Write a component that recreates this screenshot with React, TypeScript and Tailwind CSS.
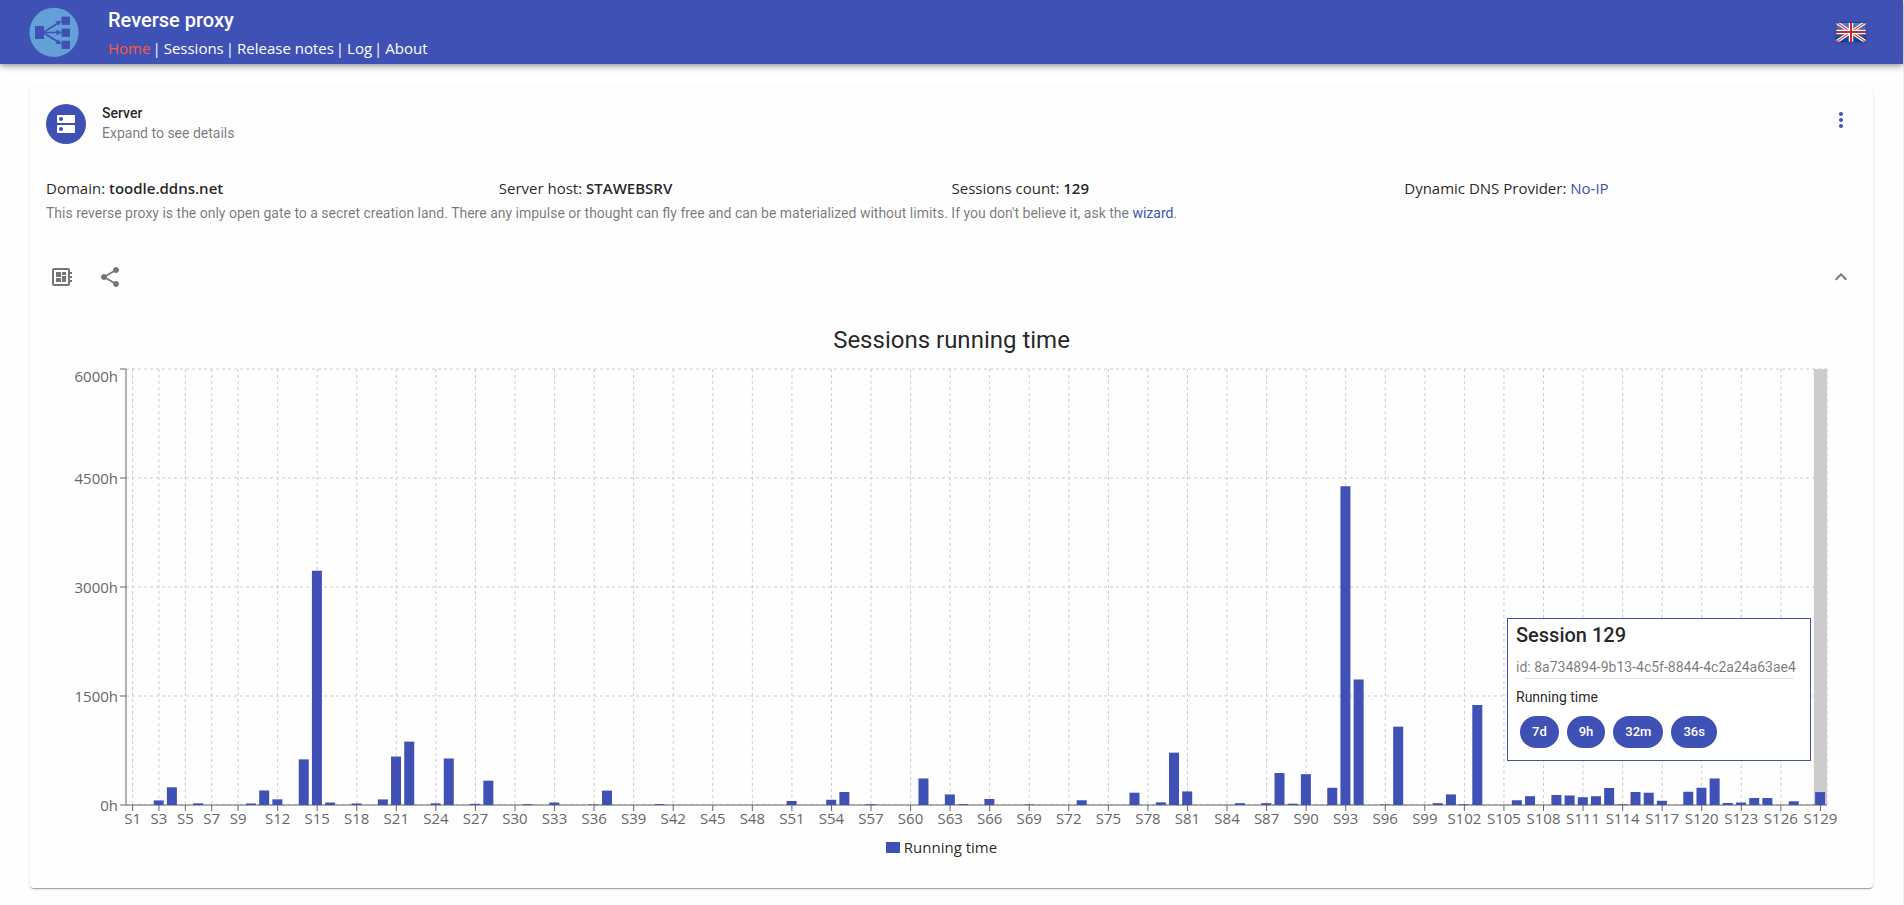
import type { ReactNode } from "react";
import { MdDeveloperBoard, MdDns, MdExpandLess, MdMoreVert, MdShare } from "react-icons/md";

const SEGOE = "font-['Open_Sans','Noto_Sans',sans-serif]";

const SESSION_COUNT = 129;
const MAX_HOURS = 6000;

const RUNNING_HOURS: Record<number, number> = {
  3: 63, 4: 244, 6: 23, 10: 21, 11: 200, 12: 78, 14: 628, 15: 3224, 16: 34, 18: 21, 20: 77,
  21: 667, 22: 872, 24: 23, 25: 640, 27: 16, 28: 335, 31: 11, 33: 34, 36: 7, 37: 198, 41: 12,
  51: 55, 54: 72, 55: 179, 57: 11, 61: 365, 63: 145, 64: 12, 66: 83, 69: 7, 73: 65, 77: 169,
  79: 37, 80: 720, 81: 187, 85: 25, 87: 25, 88: 440, 89: 18, 90: 424, 92: 237, 93: 4387,
  94: 1727, 96: 6, 97: 1078, 100: 25, 101: 146, 102: 10, 103: 1376, 106: 65, 107: 121,
  109: 138, 110: 131, 111: 107, 112: 121, 113: 234, 114: 10, 115: 179, 116: 169, 117: 58,
  119: 182, 120: 237, 121: 365, 122: 28, 123: 34, 124: 96, 125: 96, 127: 51, 129: 177.5,
};

const X_TICKS = [1, 3, 5, 7, 9, ...Array.from({ length: 40 }, (_, i) => 12 + i * 3)];
const Y_TICKS = [0, 1500, 3000, 4500, 6000];

const CHART = { width: 1811, height: 465, left: 80, right: 1781, top: 5, bottom: 441 };

function Logo() {
  return (
    <svg viewBox="0 0 50 50" className="size-[50px]" aria-hidden="true">
      <circle cx="25" cy="25.3" r="24.6" fill="#64a0d8" />
      <g fill="#3f51b5">
        <rect x="6" y="19" width="9" height="13" />
        <rect x="32.500" y="9.600" width="8.500" height="8.200" />
        <rect x="32.500" y="21.600" width="8.500" height="8.200" />
        <rect x="32.500" y="33.700" width="8.500" height="8.200" />
        <path d="M14 25.500 30 15.500M14 25.500H30M14 25.500 30 35.500" stroke="#3f51b5" strokeWidth="1.700" />
        <path d="m32.500 13.700-3 5-3-4.500zM33 25.500l-5.500 3v-6zM32.500 37.300l-6-.500 3-4.500z" />
      </g>
    </svg>
  );
}

function Flag() {
  return (
    <svg viewBox="0 0 30 20" className="block h-5 w-[30px] drop-shadow-sm" aria-hidden="true">
      <defs>
        <linearGradient id="blue" x1="0" y1="0" x2="0" y2="1">
          <stop offset="0" stopColor="#5f86cc" />
          <stop offset=".5" stopColor="#2a57a5" />
          <stop offset="1" stopColor="#123f8c" />
        </linearGradient>
      </defs>
      <rect width="30" height="20" fill="url(#blue)" />
      <path d="M0 0 30 20M30 0 0 20" stroke="#fff" strokeWidth="3.400" />
      <path d="M0 0 30 20M30 0 0 20" stroke="#e0403f" strokeWidth="1.200" />
      <path d="M15 0V20M0 10H30" stroke="#fff" strokeWidth="4.400" />
      <path d="M15 0V20M0 10H30" stroke="#d8232a" strokeWidth="2" />
      <path d="M0 .5H30" stroke="#12357a" strokeOpacity=".7" />
      <rect x=".5" y=".5" width="29" height="19" fill="none" stroke="#12357a" strokeOpacity=".3" />
    </svg>
  );
}

const NAV = ["Home", "Sessions", "Release notes", "Log", "About"];

function Header() {
  return (
    <header className="flex h-16 items-center bg-[#3f51b5] pr-[37px] pl-[29px] text-white shadow-[0_2px_4px_-1px_rgba(0,0,0,0.2),0_4px_5px_0_rgba(0,0,0,0.14),0_1px_10px_0_rgba(0,0,0,0.12)]">
      <Logo />
      <div className="ml-[29px] grow pt-1">
        <h1 className="text-xl leading-7 font-medium">Reverse proxy</h1>
        <nav className={`flex text-[15px] leading-7 ${SEGOE}`}>
          {NAV.map((item, i) => (
            <span key={item}>
              {i > 0 && <span className="mr-[3px] ml-0.5">|</span>}
              <a href="#" className={i === 0 ? "text-[#ff5a36]" : "text-white"}>{item}</a>
            </span>
          ))}
        </nav>
      </div>
      <button type="button" aria-label="Language">
        <Flag />
      </button>
    </header>
  );
}

function Fact({ label, children }: { label: string; children: ReactNode }) {
  return (
    <div>
      {label}: {children}
    </div>
  );
}

function SessionsChart() {
  const { left, right, top, bottom } = CHART;
  const band = (right - left) / SESSION_COUNT;
  const scale = (bottom - top) / MAX_HOURS;
  const center = (n: number) => left + (n - 0.5) * band;
  const yOf = (hours: number) => bottom - hours * scale;
  return (
    <svg viewBox={`0 0 ${CHART.width} ${CHART.height}`} className={`block w-full text-[15px] ${SEGOE}`} role="img" aria-label="Sessions running time">
      <g stroke="#ccc" strokeDasharray="3 3">
        {Y_TICKS.map((t) => <line key={t} x1={left} x2={right} y1={yOf(t)} y2={yOf(t)} />)}
        {X_TICKS.map((t) => <line key={t} x1={center(t)} x2={center(t)} y1={top} y2={bottom} />)}
        <line x1={right} x2={right} y1={top} y2={bottom} />
      </g>
      <rect x={right - band} y={top} width={band} height={bottom - top} fill="#ccc" />
      <g stroke="#666">
        <line x1={left} x2={right} y1={bottom} y2={bottom} />
        <line x1={left} x2={left} y1={top} y2={bottom} />
        {X_TICKS.map((t) => <line key={t} x1={center(t)} x2={center(t)} y1={bottom} y2={bottom + 6} />)}
        {Y_TICKS.map((t) => <line key={t} x1={left - 6} x2={left} y1={yOf(t)} y2={yOf(t)} />)}
      </g>
      <g fill="#666" textAnchor="middle">
        {X_TICKS.map((t) => <text key={t} x={center(t)} y={bottom + 19}>{`S${t}`}</text>)}
      </g>
      <g fill="#666" textAnchor="end">
        {Y_TICKS.map((t) => <text key={t} x={left - 8} y={Math.max(yOf(t) + 6, 18)}>{`${t}h`}</text>)}
      </g>
      <g fill="#3f51b5">
        {Object.entries(RUNNING_HOURS).map(([n, hours]) => (
          <rect key={n} x={center(Number(n)) - band * 0.4} y={yOf(hours)} width={10} height={hours * scale} />
        ))}
      </g>
    </svg>
  );
}

function SessionTooltip() {
  return (
    <div className="absolute top-[254px] right-[46px] w-[304px] border border-[#3f51b5] bg-white px-2 pb-3">
      <h3 className="text-xl leading-8 font-medium">Session 129</h3>
      <p className="mt-1 text-sm leading-6 whitespace-nowrap text-black/54">id: 8a734894-9b13-4c5f-8844-4c2a24a63ae4</p>
      <hr className="mx-2 -mt-px border-black/12" />
      <p className="mt-2 text-sm leading-5">Running time</p>
      <ul className="mt-[9px] ml-1 flex gap-2">
        {["7d", "9h", "32m", "36s"].map((part) => (
          <li key={part} className="rounded-full bg-[#3f51b5] px-3 text-[13px] leading-8 font-medium text-white">{part}</li>
        ))}
      </ul>
    </div>
  );
}

export default function App() {
  return (
    <div className="min-h-screen border-r border-[#eee] bg-[#fefefe] font-[Roboto,sans-serif] text-black/87">
      <Header />
      <main className="px-[30px] pt-6 pb-4">
        <section className="rounded bg-[#fefefe] px-4 pt-4 shadow-[0_2px_1px_-1px_rgba(0,0,0,0.2),0_1px_1px_0_rgba(0,0,0,0.14),0_1px_3px_0_rgba(0,0,0,0.12)]">
          <div className="flex items-start">
            <span className="flex size-10 items-center justify-center rounded-full bg-[#3f51b5] text-white">
              <MdDns className="size-6" />
            </span>
            <div className="-mt-px ml-4 grow text-sm leading-5">
              <h2 className="font-medium">Server</h2>
              <p className="text-black/54">Expand to see details</p>
            </div>
            <button type="button" aria-label="More" className="mt-1 mr-1 text-[#3f51b5]">
              <MdMoreVert className="size-6" />
            </button>
          </div>

          <div className={`mt-8 grid grid-cols-4 text-[15px] leading-6 ${SEGOE}`}>
            <Fact label="Domain"><b className="font-semibold">toodle.ddns.net</b></Fact>
            <Fact label="Server host"><b className="font-semibold">STAWEBSRV</b></Fact>
            <Fact label="Sessions count"><b className="font-semibold">129</b></Fact>
            <Fact label="Dynamic DNS Provider"><a href="#" className="text-[#3f51b5]">No-IP</a></Fact>
          </div>
          <p className="mt-px text-sm leading-6 text-black/54">
            This reverse proxy is the only open gate to a secret creation land. There any impulse or thought can fly free and can be materialized without limits. If you don't believe it, ask the <a href="#" className="text-[#3f51b5]">wizard</a>.
          </p>

          <div className="mt-10 flex items-center gap-6 px-1 text-black/54">
            <button type="button" aria-label="Board"><MdDeveloperBoard className="size-6" /></button>
            <button type="button" aria-label="Share"><MdShare className="size-6" /></button>
            <button type="button" aria-label="Collapse" className="ml-auto"><MdExpandLess className="size-6" /></button>
          </div>

          <h2 className="mt-[35px] text-center text-2xl leading-8">Sessions running time</h2>
          <div className="relative mt-2">
            <SessionsChart />
            <SessionTooltip />
          </div>
          <div className={`flex items-center justify-center gap-1 pt-1.5 pr-5 pb-[29px] text-[15px] leading-6 ${SEGOE}`}>
            <span className="h-[11px] w-3.5 bg-[#3f51b5]" />
            Running time
          </div>
        </section>
      </main>
    </div>
  );
}
